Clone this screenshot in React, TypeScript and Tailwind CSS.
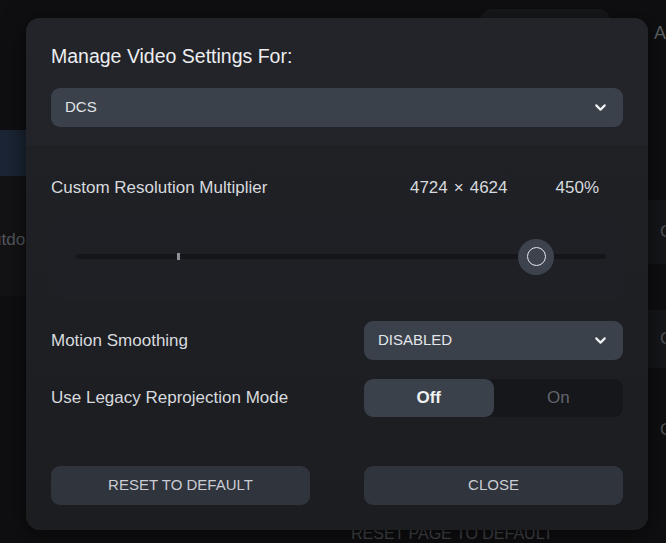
import React from "react";
import { ChevronDown } from "lucide-react";

const font = { fontFamily: '"Liberation Sans", Arial, sans-serif' };

const Select: React.FC<{ value: string }> = ({ value }) => (
  <div className="flex h-[39px] items-center justify-between rounded-[9px] bg-[#3b414b] px-[14px] text-[15px] text-[#e2e5e9]">
    <span>{value}</span>
    <ChevronDown size={17} strokeWidth={3} className="text-[#eef0f2]" />
  </div>
);

const Slider: React.FC<{ pct: number; tick: number }> = ({ pct, tick }) => (
  <div className="mt-[14px] rounded-[10px] bg-[#1f2025] pb-[41px] pl-[25px] pr-[17px] pt-[40px]">
    <div className="relative h-[5px] rounded-full bg-[#15161a]">
      <div className="absolute top-[-1px] h-[7px] w-[3px] bg-[#8d9097]" style={{ left: `${tick}%` }} />
      <div
        className="absolute top-1/2 flex h-[36px] w-[36px] -translate-x-1/2 -translate-y-1/2 items-center justify-center rounded-full bg-[#3d434d]"
        style={{ left: `${pct}%` }}
      >
        <div className="h-[19px] w-[19px] rounded-full border-[1.5px] border-[#e4e6ea]" />
      </div>
    </div>
  </div>
);

const Toggle: React.FC = () => (
  <div className="flex h-[38px] rounded-[9px] bg-[#16171b] text-[17px]">
    <div className="flex w-1/2 items-center justify-center rounded-[9px] bg-[#3b414b] font-bold text-[#eef0f2]">
      Off
    </div>
    <div className="flex w-1/2 items-center justify-center text-[#62656c]">On</div>
  </div>
);

export default function App() {
  return (
    <div className="relative h-[543px] w-[666px] overflow-hidden bg-[#0f0f11]" style={font}>
      {/* page behind the dialog */}
      <div className="flex h-full">
        <div className="flex w-[40px] flex-col">
          <div className="h-[130px]" />
          <div className="h-[46px] bg-[#1b2535]" />
          <div className="flex h-[120px] items-start bg-[#131315] pt-[54px]">
            <span className="-ml-[8px] text-[17px] leading-[20px] text-[#55585e]">utdo</span>
          </div>
        </div>
        <div className="flex flex-1 flex-col justify-between">
          <div className="ml-[440px] mt-[9px] h-[30px] w-[130px] rounded-[12px] bg-[#18191c]" />
          <div className="ml-[311px] h-[18px] text-[16px] leading-[18px] text-[#45474c]">RESET PAGE TO DEFAULT</div>
        </div>
        <div className="flex w-[26px] flex-col text-[17px] text-[#4e5156]">
          <div className="ml-[14px] mt-[20px] h-[180px] text-[18px] text-[#5e6166]">A</div>
          <div className="flex h-[64px] items-center bg-[#16171a] pl-[20px]">C</div>
          <div className="h-[46px]" />
          <div className="flex h-[58px] items-center bg-[#16171a] pl-[20px]">C</div>
          <div className="flex h-[124px] items-center pl-[20px]">C</div>
        </div>
      </div>

      {/* dialog */}
      <div className="absolute left-[26px] top-[18px] w-[622px] overflow-hidden rounded-[14px] bg-gradient-to-b from-[#212227] to-[#1c1d21] shadow-[0_4px_24px_rgba(0,0,0,0.6)]">
        <div className="bg-[#232429] px-[25px] pb-[18px] pt-[26px]">
          <div className="text-[19.5px] leading-[24px] text-[#eceef1]">Manage Video Settings For:</div>
          <div className="mt-[20px]">
            <Select value="DCS" />
          </div>
        </div>

        <div className="px-[25px] pb-[25px]">
          <div className="mt-[31px] flex items-center text-[17px] leading-[24px] text-[#d7dade]">
            <span className="flex-1">Custom Resolution Multiplier</span>
            <span className="mr-[48px]">
              4724<span className="px-[6px]">×</span>4624
            </span>
            <span className="mr-[24px]">450%</span>
          </div>
          <Slider pct={86.8} tick={19} />

          <div className="mt-[21px] grid grid-cols-2 items-center gap-x-[54px] gap-y-[19px] text-[17px] text-[#d7dade]">
            <span>Motion Smoothing</span>
            <Select value="DISABLED" />
            <span>Use Legacy Reprojection Mode</span>
            <Toggle />
          </div>

          <div className="mt-[49px] grid grid-cols-2 gap-x-[54px] text-[15px] text-[#c9cdd3]">
            <button className="h-[39px] rounded-[9px] bg-[#30343c]">RESET TO DEFAULT</button>
            <button className="h-[39px] rounded-[9px] bg-[#30343c]">CLOSE</button>
          </div>
        </div>
      </div>
    </div>
  );
}
